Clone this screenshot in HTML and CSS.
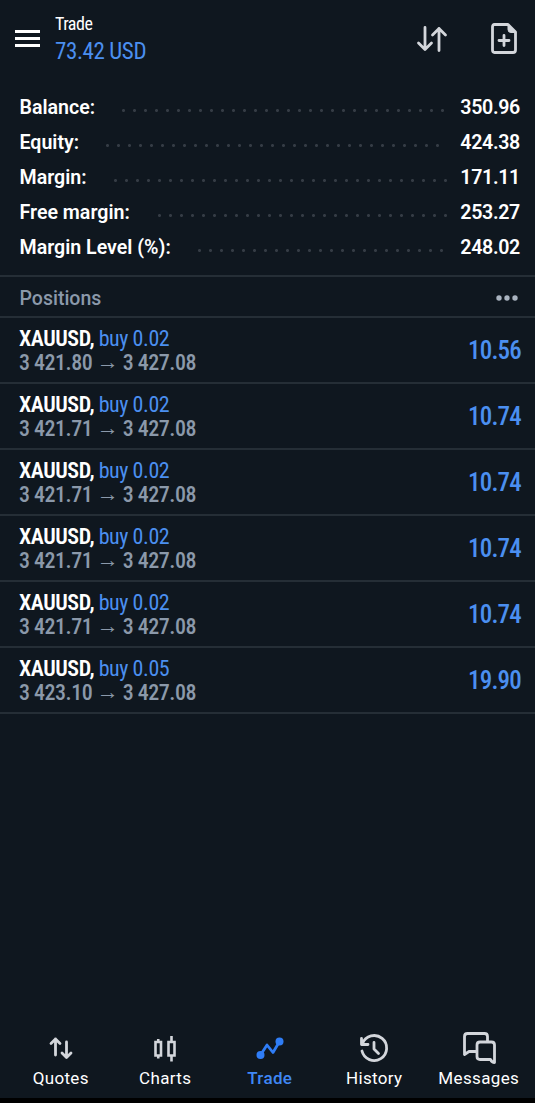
FILE: index.html
```
<!DOCTYPE html>
<html lang="en">
<head>
    <meta charset="utf-8">
    <title>Trade</title>
    <link rel="stylesheet" href="styles.css">
</head>
<body>
    <div class="app">
        <header class="topbar">
            <svg class="menu" width="25" height="17" viewBox="0 0 25 17">
                <path d="M0 1.5h25M0 8.5h25M0 15.5h25"/>
            </svg>
            <div class="heading">
                <h1><span class="cond">Trade</span></h1>
                <p class="profit"><span class="cond">73.42 USD</span></p>
            </div>
            <svg class="icon sort" width="32" height="26" viewBox="0 0 32 26">
                <path d="M9 1.5v22M2.500 17l6.500 6.500 6.500-6.500M23 24.500v-22M16.500 9l6.500-6.500 6.500 6.500"/>
            </svg>
            <svg class="icon new-order" width="26" height="31" viewBox="0 0 26 31">
                <path d="M3.500 1.500h13.500l7.500 7.500V27q0 2.500-2.500 2.500H3.500q-2 0-2-2.500V4q0-2.500 2-2.500zM13 12.500v10M8 17.500h10"/>
                <path class="fold" d="M17 1.500v5q0 3 3 3h4.500z"/>
            </svg>
        </header>

        <ul class="summary">
            <li><span>Balance:</span><i class="dots balance"></i><b>350.96</b></li>
            <li><span>Equity:</span><i class="dots equity"></i><b>424.38</b></li>
            <li><span>Margin:</span><i class="dots margin"></i><b>171.11</b></li>
            <li><span>Free margin:</span><i class="dots free"></i><b>253.27</b></li>
            <li><span>Margin Level (%):</span><i class="dots level"></i><b>248.02</b></li>
        </ul>

        <div class="section">
            <h2>Positions</h2>
            <svg width="24" height="6" viewBox="0 0 24 6">
                <circle cx="3" cy="3" r="2.700"/><circle cx="11" cy="3" r="2.700"/><circle cx="19" cy="3" r="2.700"/>
            </svg>
        </div>

        <ul class="positions">
            <li>
                <div>
                    <p class="symbol"><span class="cond"><b>XAUUSD,</b> <em>buy 0.02</em></span></p>
                    <p class="price"><span class="cond">3 421.80 <i>→</i> 3 427.08</span></p>
                </div>
                <strong><span class="cond">10.56</span></strong>
            </li>
            <li>
                <div>
                    <p class="symbol"><span class="cond"><b>XAUUSD,</b> <em>buy 0.02</em></span></p>
                    <p class="price"><span class="cond">3 421.71 <i>→</i> 3 427.08</span></p>
                </div>
                <strong><span class="cond">10.74</span></strong>
            </li>
            <li>
                <div>
                    <p class="symbol"><span class="cond"><b>XAUUSD,</b> <em>buy 0.02</em></span></p>
                    <p class="price"><span class="cond">3 421.71 <i>→</i> 3 427.08</span></p>
                </div>
                <strong><span class="cond">10.74</span></strong>
            </li>
            <li>
                <div>
                    <p class="symbol"><span class="cond"><b>XAUUSD,</b> <em>buy 0.02</em></span></p>
                    <p class="price"><span class="cond">3 421.71 <i>→</i> 3 427.08</span></p>
                </div>
                <strong><span class="cond">10.74</span></strong>
            </li>
            <li>
                <div>
                    <p class="symbol"><span class="cond"><b>XAUUSD,</b> <em>buy 0.02</em></span></p>
                    <p class="price"><span class="cond">3 421.71 <i>→</i> 3 427.08</span></p>
                </div>
                <strong><span class="cond">10.74</span></strong>
            </li>
            <li>
                <div>
                    <p class="symbol"><span class="cond"><b>XAUUSD,</b> <em>buy 0.05</em></span></p>
                    <p class="price"><span class="cond">3 423.10 <i>→</i> 3 427.08</span></p>
                </div>
                <strong><span class="cond">19.90</span></strong>
            </li>
        </ul>

        <nav class="tabs">
            <a>
                <svg width="36" height="36" viewBox="0 0 36 36">
                    <path d="M12.500 26V10M8 14.500l4.500-4.500 4.500 4.500M23.500 13v15.500M19 24l4.500 4.500 4.500-4.500"/>
                </svg>
                <span>Quotes</span>
            </a>
            <a>
                <svg class="candles" width="36" height="36" viewBox="0 0 36 36">
                    <path d="M8.500 13h5.500v13.500h-5.500zM11.250 10v3M11.250 26.500v3M21.500 13h6v13.500h-6zM24.500 7v6M24.500 26.500v6"/>
                </svg>
                <span>Charts</span>
            </a>
            <a class="active">
                <svg width="36" height="36" viewBox="0 0 36 36">
                    <path d="M8.500 26l6.500-10 6 7.500 6.500-11"/>
                    <circle cx="8.500" cy="26" r="4"/><circle cx="27.500" cy="12.500" r="4"/>
                </svg>
                <span>Trade</span>
            </a>
            <a>
                <svg class="clock" width="36" height="36" viewBox="0 0 36 36">
                    <path d="M6.500 14.500A12.500 12.500 0 1 1 6 22M5.500 9.500v6h6.500M18 13.500v6.500l4.500 4.500"/>
                </svg>
                <span>History</span>
            </a>
            <a>
                <svg class="chat" width="36" height="36" viewBox="0 0 36 36">
                    <path d="M14.500 22.500H8L3.500 25.500V7.500q0-3 3-3h17q3 0 3 3V13M19 13h11.500q3 0 3 3V33.500q-2.500 0-4-3H19q-3 0-3-3V16q0-3 3-3z"/>
                </svg>
                <span>Messages</span>
            </a>
        </nav>
    </div>
</body>
</html>
```
FILE: styles.css
```
*{padding: 0;margin: 0;box-sizing: border-box;}
body{
    background: #000;
    color: #fff;
    font-family: Roboto, "Liberation Sans", sans-serif;
}
ul{list-style: none;}
i,em{font-style: normal;}
svg{
    display: block;
    fill: none;
    stroke: #d3d6db;
    stroke-width: 2.8;
    stroke-linecap: round;
    stroke-linejoin: round;
}
.app{
    display: flex;
    flex-direction: column;
    width: 535px;
    height: 1098px;
    background: #0f171f;
}
.cond{
    display: inline-block;
    font-family: "Roboto Condensed", Roboto, sans-serif;
    font-stretch: 75%;
    white-space: nowrap;
}

/* top bar */
.topbar{
    display: flex;
    align-items: center;
    height: 77px;
    padding: 0 18px 0 15px;
}
.menu{
    stroke: #fff;
    stroke-width: 2.8;
    stroke-linecap: butt;
}
.heading{
    flex: 1;
    margin-left: 15px;
}
.heading h1{
    font-size: 18px;
    font-weight: 400;
    line-height: 25px;
    letter-spacing: -.5px;
}
.profit{
    color: #4b8ff0;
    font-size: 23px;
    line-height: 31px;
    letter-spacing: -.4px;
}
.new-order{
    margin-left: 43px;
}
.new-order .fold{fill: #d3d6db;stroke-width: 1;}

/* account summary */
.summary{
    height: 198px;
    padding: 13px 15px 0 19.5px;
}
.summary li{
    display: flex;
    align-items: center;
    height: 35px;
    font-size: 19.6px;
    font-weight: 600;
}
.summary b{
    margin-left: auto;
    font-weight: 600;
    letter-spacing: -.3px;
}
.dots{
    flex: none;
    height: 3px;
    margin-top: 5px;
    background: radial-gradient(circle at 1.5px 1.5px, #353c45 1px, transparent 2px) 0 0 / 11px 3px;
}
.balance{width: 323px;margin-left: 27px;}
.equity{width: 334px;margin-left: 27px;}
.margin{width: 334px;margin-left: 27px;}
.free{width: 290px;margin-left: 28px;}
.level{width: 246px;margin-left: 27px;}

/* positions */
.section{
    display: flex;
    align-items: center;
    justify-content: space-between;
    height: 42px;
    padding: 1px 15px 0 19.5px;
    border-top: 2px solid #252e36;
    color: #8b99aa;
}
.section h2{
    padding-top: 2px;
    font-size: 19.5px;
    font-weight: 500;
}
.section svg{
    fill: #a9b3bf;
    stroke: none;
}
.positions{
    border-top: 2px solid #252e36;
    margin-top: -1px;
}
.positions li{
    display: flex;
    align-items: center;
    justify-content: space-between;
    height: 66px;
    padding: 2px 14px 0 19px;
    border-bottom: 2px solid #252e36;
}
.positions p{
    font-size: 22px;
    line-height: 24px;
    letter-spacing: -.45px;
}
.symbol b{font-weight: 600;}
.symbol em{color: #4b8ff0;}
.positions .price{
    color: #8b99aa;
    font-weight: 500;
    letter-spacing: -.5px;
}
.price i{
    position: relative;
    top: -1px;
}
.positions strong{
    padding-bottom: 2px;
    color: #4b8ff0;
    font-size: 25px;
    font-weight: 500;
    letter-spacing: -.8px;
}

/* bottom tabs */
.tabs{
    display: grid;
    grid-template-columns: repeat(5, 104.5px);
    margin-top: auto;
    padding: 0 0 8px 8.5px;
}
.tabs a{
    display: flex;
    flex-direction: column;
    align-items: center;
    font-size: 17px;
    letter-spacing: .35px;
    line-height: 24px;
}
.tabs svg{
    position: relative;
    top: -1px;
}
.tabs .candles{
    stroke-width: 2.6;
    stroke-linecap: butt;
    stroke-linejoin: miter;
}
.tabs .active{
    color: #3f87f5;
    font-weight: 500;
}
.active svg{stroke: #2f7df6;}
.active circle{fill: #2f7df6;stroke: none;}
```
